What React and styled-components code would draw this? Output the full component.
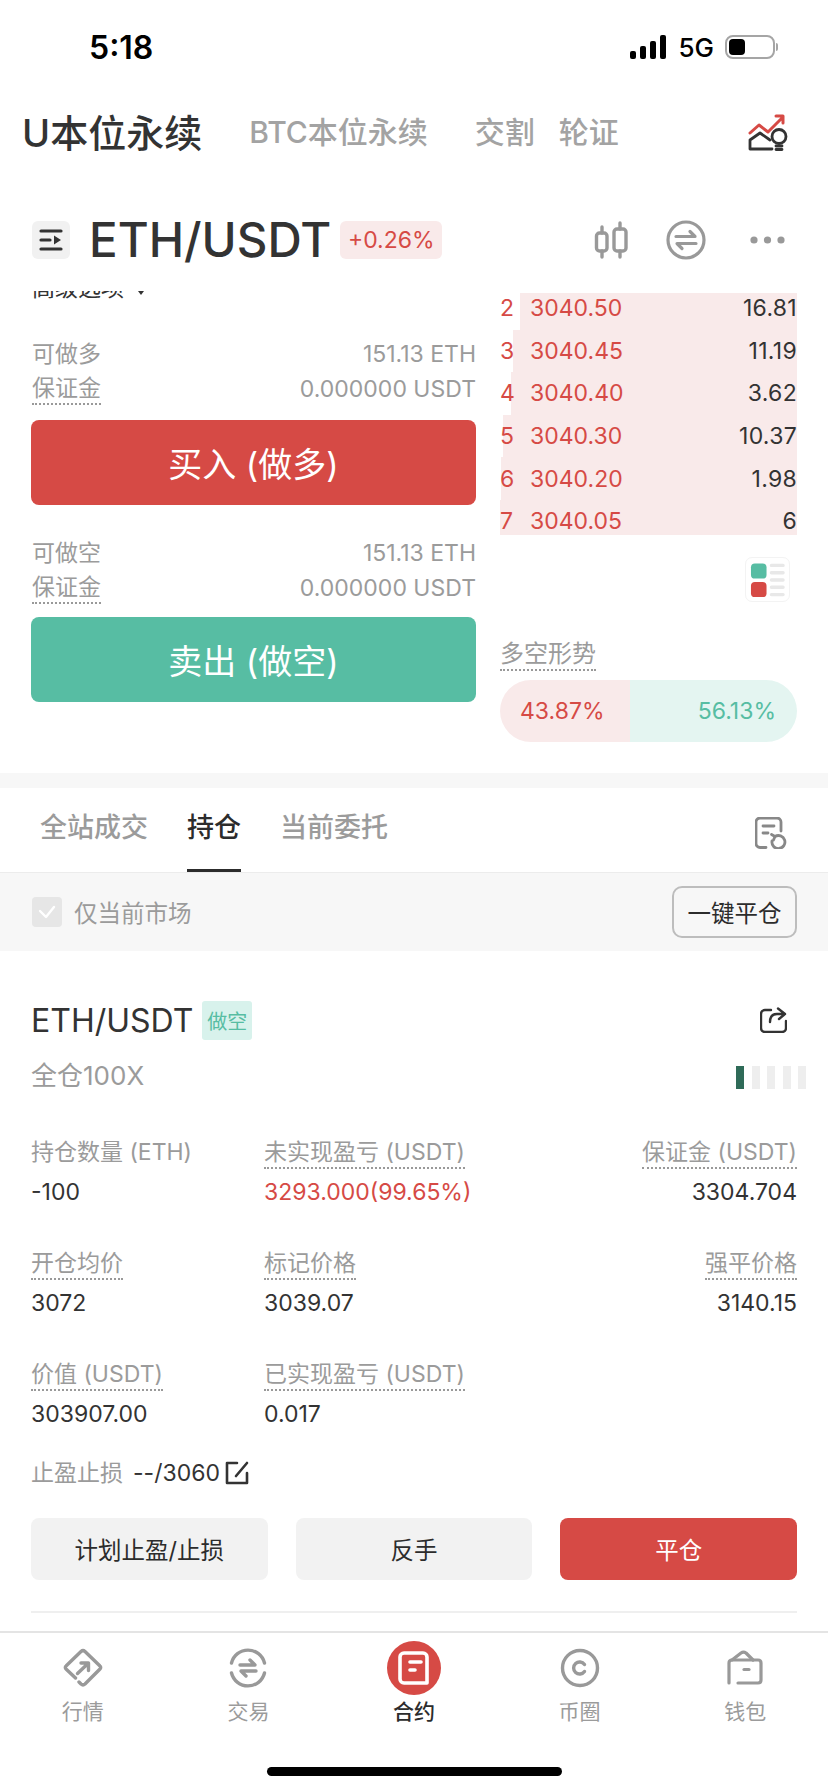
import React from "react";
import styled, { createGlobalStyle } from "styled-components";

const RED = "#d64a45";
const GREEN = "#57bda3";
const DARK = "#333";
const GREY = "#9b9b9b";

const GlobalStyle = createGlobalStyle`
  html, body {
    margin: 0;
    padding: 0;
    background: #fff;
  }
  * {
    box-sizing: border-box;
  }
`;

const Page = styled.div`
  width: 828px;
  height: 1792px;
  overflow: hidden;
  display: flex;
  flex-direction: column;
  background: #fff;
  color: ${DARK};
  font-family: Inter, "Noto Sans CJK SC", sans-serif;
`;

/* status bar */
const StatusBar = styled.div`
  height: 94px;
  flex: none;
  display: flex;
  align-items: center;
  padding: 0 53px 0 89px;
  color: #000;
`;
const Clock = styled.div`
  font-size: 32px;
  font-weight: 600;
  margin-right: auto;
`;
const Signal = styled.div`
  display: flex;
  align-items: flex-end;
  gap: 4px;
  height: 24px;
  margin-right: 12px;
`;
const SignalBar = styled.span`
  width: 6px;
  height: ${(props) => props.$h}px;
  background: #000;
  border-radius: 2px;
`;
const Network = styled.div`
  font-size: 26px;
  font-weight: 500;
  margin-right: 11px;
`;
const Battery = styled.div`
  position: relative;
  width: 50px;
  height: 24px;
  border: 2px solid #a5a5a5;
  border-radius: 8px;
  padding: 2px;
  &::after {
    content: "";
    position: absolute;
    right: -5px;
    top: 6px;
    width: 2px;
    height: 8px;
    background: #a5a5a5;
    border-radius: 0 2px 2px 0;
  }
`;
const BatteryLevel = styled.div`
  width: 16px;
  height: 100%;
  background: #000;
  border-radius: 4px;
`;

/* contract type tabs */
const TypeTabs = styled.div`
  height: 72px;
  flex: none;
  display: flex;
  align-items: center;
  padding: 0 40px 0 22px;
`;
const TypeTab = styled.div`
  font-size: ${(props) => (props.$active ? "38px" : "30px")};
  font-weight: 500;
  color: ${(props) => (props.$active ? DARK : "#a3a3a3")};
  margin-right: ${(props) => props.$gap}px;
  white-space: nowrap;
`;
const TipIcon = styled.svg`
  margin-left: auto;
  margin-top: 6px;
`;

/* market header */
const MarketBar = styled.div`
  height: 125px;
  flex: none;
  display: flex;
  align-items: flex-start;
  padding: 55px 42px 0 32px;
`;
const MenuButton = styled.div`
  width: 38px;
  height: 38px;
  background: #f1f1f1;
  border-radius: 6px;
  display: flex;
  align-items: center;
  justify-content: center;
  margin-right: 19px;
`;
const Pair = styled.div`
  font-size: 47.5px;
  font-weight: 500;
  line-height: 38px;
  margin-right: 9px;
`;
const ChangeBadge = styled.div`
  height: 38px;
  width: 102px;
  background: #f9eaea;
  border-radius: 6px;
  color: ${RED};
  font-size: 23px;
  display: flex;
  align-items: center;
  justify-content: center;
`;
const MarketActions = styled.div`
  margin-left: auto;
  display: flex;
  align-items: center;
  height: 38px;
`;

/* order form and book */
const TradeArea = styled.div`
  height: 482px;
  flex: none;
  display: grid;
  grid-template-columns: 445px 297px;
  column-gap: 24px;
  padding-left: 31px;
`;
const FormColumn = styled.div`
  display: flex;
  flex-direction: column;
`;
const ClippedOption = styled.div`
  height: 11px;
  margin-bottom: 34px;
  padding-left: 1px;
  overflow: hidden;
  display: flex;
  align-items: flex-end;
  gap: 14px;
  font-size: 23px;
  line-height: 27px;
  color: ${DARK};
`;
const OptionCaret = styled.span`
  width: 0;
  height: 0;
  border: 3.5px solid transparent;
  border-top: 4px solid ${DARK};
  border-bottom: 0;
  margin-bottom: 7px;
`;
const InfoRow = styled.div`
  height: 35px;
  padding-left: 1px;
  display: flex;
  align-items: center;
  justify-content: space-between;
  font-size: 23px;
  line-height: 30px;
  color: ${GREY};
`;
const Dotted = styled.span`
  display: inline-block;
  border-bottom: 2px dotted ${(props) => (props.$plain ? "transparent" : "#999")};
  line-height: 30px;
  color: ${GREY};
`;
const ActionButton = styled.div`
  height: ${(props) => (props.$small ? "62px" : "85px")};
  background: ${(props) => props.$bg || "#f2f2f2"};
  color: ${(props) => (props.$bg ? "#fff" : "#2c2c2c")};
  font-size: ${(props) => (props.$small ? "23.5px" : "34px")};
  border-radius: 8px;
  display: flex;
  align-items: center;
  justify-content: center;
  margin: ${(props) => props.$margin || "0"};
`;
const BookColumn = styled.div`
  display: flex;
  flex-direction: column;
  padding-top: 2px;
`;
const Book = styled.div`
  height: 242px;
  flex: none;
  overflow: hidden;
`;
const BookRow = styled.div`
  position: relative;
  height: 42.6px;
  display: flex;
  align-items: center;
  font-size: 23px;
  color: ${RED};
  &:first-child {
    margin-top: -6px;
  }
`;
const DepthBar = styled.div`
  position: absolute;
  top: 0;
  bottom: 0;
  right: 0;
  background: #f9eaea;
`;
const BookIndex = styled.span`
  position: relative;
  width: 30px;
`;
const BookPrice = styled.span`
  position: relative;
`;
const BookQty = styled.span`
  position: relative;
  margin-left: auto;
  letter-spacing: 0.3px;
  color: ${DARK};
`;
const LayoutToggle = styled.div`
  align-self: flex-end;
  width: 45px;
  height: 45px;
  margin: 22px 7px 0 0;
  padding: 4px;
  border: 1px solid #f3f3f3;
  border-radius: 7px;
  display: flex;
  align-items: center;
`;
const SentimentLabel = styled.div`
  margin-top: 37px;
  font-size: 24px;
  line-height: 30px;
`;
const SentimentPill = styled.div`
  margin-top: 9px;
  height: 62px;
  border-radius: 31px;
  overflow: hidden;
  display: flex;
  font-size: 23px;
`;
const LongShare = styled.div`
  width: 130px;
  background: #f9eaea;
  color: ${RED};
  display: flex;
  align-items: center;
  padding-left: 20px;
`;
const ShortShare = styled.div`
  flex: 1;
  background: #e4f5f1;
  color: ${GREEN};
  display: flex;
  align-items: center;
  justify-content: flex-end;
  padding-right: 21px;
`;

const Band = styled.div`
  height: 15px;
  flex: none;
  background: #f7f7f7;
`;

/* positions tabs */
const ListTabs = styled.div`
  height: 85px;
  flex: none;
  display: flex;
  gap: 39px;
  padding: 0 41px 0 40px;
  border-bottom: 1px solid #ececec;
`;
const ListTab = styled.div`
  height: 84px;
  padding-top: 22px;
  font-size: 27px;
  line-height: 36px;
  font-weight: 500;
  color: ${(props) => (props.$active ? "#2c2c2c" : GREY)};
  border-bottom: 3px solid ${(props) => (props.$active ? "#2c2c2c" : "transparent")};
`;
const HistoryIcon = styled.svg`
  margin: 29px 0 0 auto;
`;
const FilterBar = styled.div`
  height: 78px;
  flex: none;
  background: #f7f7f7;
  display: flex;
  align-items: center;
  padding: 0 31px 0 32px;
`;
const Checkbox = styled.div`
  width: 30px;
  height: 30px;
  background: #e6e6e6;
  border-radius: 4px;
  display: flex;
  align-items: center;
  justify-content: center;
  margin-right: 12px;
`;
const FilterLabel = styled.div`
  font-size: 23.5px;
  color: ${GREY};
`;
const CloseAll = styled.div`
  margin-left: auto;
  width: 125px;
  height: 52px;
  border: 2px solid #bdbdbd;
  border-radius: 10px;
  font-size: 23.5px;
  color: #2c2c2c;
  display: flex;
  align-items: center;
  justify-content: center;
`;

/* position card */
const Position = styled.div`
  flex: 1;
  padding: 49px 31px 0 31px;
  display: flex;
  flex-direction: column;
`;
const PositionHead = styled.div`
  height: 40px;
  display: flex;
  align-items: center;
`;
const PositionPair = styled.div`
  font-size: 32px;
  margin-right: 9px;
`;
const SideTag = styled.div`
  width: 50px;
  height: 39px;
  background: #d8f2ec;
  color: ${GREEN};
  font-size: 20px;
  border-radius: 3px;
  display: flex;
  align-items: center;
  justify-content: center;
`;
const ShareIcon = styled.svg`
  margin: 0 10px 0 auto;
`;
const MarginRow = styled.div`
  height: 30px;
  margin-top: 22px;
  display: flex;
  align-items: center;
  justify-content: space-between;
  font-size: 26px;
  line-height: 30px;
  color: ${GREY};
`;
const MarginLabel = styled.span`
  padding-bottom: 3px;
`;
const RiskMeter = styled.div`
  display: flex;
  gap: 7.5px;
  margin-right: -9px;
`;
const RiskStep = styled.span`
  width: 8px;
  height: 23px;
  background: ${(props) => (props.$on ? "#2f6b58" : "#eeeeee")};
`;
const Stats = styled.div`
  margin-top: 45px;
  display: grid;
  grid-template-columns: 233px 1fr auto;
  row-gap: 41px;
`;
const Stat = styled.div`
  display: flex;
  flex-direction: column;
  align-items: ${(props) => (props.$right ? "flex-end" : "flex-start")};
  font-size: 23px;
`;
const StatValue = styled.div`
  margin-top: 8px;
  font-size: 23px;
  line-height: 30px;
  color: ${(props) => (props.$red ? RED : DARK)};
`;
const StopRow = styled.div`
  height: 30px;
  margin-top: 29px;
  display: flex;
  align-items: center;
  line-height: 30px;
`;
const StopLabel = styled.span`
  font-size: 23px;
  color: ${GREY};
  margin-right: 10px;
`;
const StopValue = styled.span`
  font-size: 23px;
  margin-right: 5px;
`;
const ButtonRow = styled.div`
  margin-top: 30px;
  display: grid;
  grid-template-columns: repeat(3, 1fr);
  column-gap: 28px;
`;
const Divider = styled.div`
  height: 2px;
  margin-top: 31px;
  background: #efefef;
`;

/* bottom navigation */
const TabBar = styled.div`
  height: 161px;
  flex: none;
  border-top: 2px solid #e4e4e4;
  padding-top: 8px;
  display: flex;
  flex-direction: column;
`;
const TabRow = styled.div`
  display: grid;
  grid-template-columns: repeat(5, 1fr);
`;
const TabItem = styled.div`
  display: flex;
  flex-direction: column;
  align-items: center;
`;
const TabIcon = styled.div`
  width: 54px;
  height: 54px;
  border-radius: 50%;
  background: ${(props) => (props.$active ? RED : "transparent")};
  display: flex;
  align-items: center;
  justify-content: center;
`;
const TabLabel = styled.div`
  margin-top: 3px;
  font-size: 21px;
  line-height: 28px;
  color: ${(props) => (props.$active ? "#2c2c2c" : GREY)};
  font-weight: ${(props) => (props.$active ? 500 : 400)};
`;
const HomeIndicator = styled.div`
  width: 295px;
  height: 9px;
  margin: 41px auto 0;
  background: #000;
  border-radius: 5px;
`;

const stroke = { fill: "none", strokeLinecap: "round", strokeLinejoin: "round" };

const Candles = () => (
  <svg width="34" height="38" viewBox="0 0 34 38" style={{ marginRight: 38 }}>
    <g {...stroke} stroke="#999" strokeWidth="3.4">
      <path d="M8 6v6M8 30v6M26 2v6M26 30v6" />
      <rect x="2.5" y="12" width="10.5" height="18" rx="3" />
      <rect x="20" y="8" width="12" height="22" rx="3" />
    </g>
  </svg>
);

const SwapCircle = () => (
  <svg width="40" height="40" viewBox="0 0 40 40" style={{ marginRight: 43 }}>
    <g {...stroke} stroke="#999" strokeWidth="3.2">
      <circle cx="20" cy="20" r="18" />
      <path d="M10 16.500h19l-5-5M30 23.500H11l5 5" />
    </g>
  </svg>
);

const MoreDots = () => (
  <svg width="37" height="10" viewBox="0 0 37 10">
    <circle cx="5" cy="5" r="3.6" fill="#999" />
    <circle cx="18.5" cy="5" r="3.6" fill="#999" />
    <circle cx="32" cy="5" r="3.6" fill="#999" />
  </svg>
);

const MenuGlyph = () => (
  <svg width="24" height="24" viewBox="0 0 24 24">
    <g stroke="#333" strokeWidth="3.2" strokeLinecap="round">
      <path d="M2 3h20M2 21h20M2 12h9" />
    </g>
    <path d="M15 7.5 22 12l-7 4.5z" fill="#333" />
  </svg>
);

const tabIcons = [
  <svg key="market" width="40" height="40" viewBox="0 0 40 40">
    <g {...stroke} stroke="#999" strokeWidth="3.4">
      <path d="M12.500 30 3 21a2 2 0 0 1 0-3L18 3.500a3 3 0 0 1 4 0L37 18a2 2 0 0 1 0 3L22 36a3 3 0 0 1-4 0l-2-2" />
      <path d="M14.500 25.500 25 15.500M18 15h7.500v7.500" />
    </g>
  </svg>,
  <svg key="trade" width="40" height="40" viewBox="0 0 40 40">
    <g {...stroke} stroke="#999" strokeWidth="3.4">
      <path d="M3.500 15A17 17 0 0 1 36.500 15M3.500 25A17 17 0 0 0 36.500 25" />
      <path d="M12 17h15l-5-5M28 23H13l5 5" />
    </g>
  </svg>,
  <svg key="contract" width="34" height="36" viewBox="0 0 34 36">
    <g {...stroke} stroke="#fff" strokeWidth="3.6">
      <path d="M30 33H7a4 4 0 0 1-4-4V7a4 4 0 0 1 4-4h19a4 4 0 0 1 4 4z" />
      <path d="M13 12h11M13 20h5" />
    </g>
  </svg>,
  <svg key="coin" width="40" height="40" viewBox="0 0 40 40">
    <g {...stroke} stroke="#999" strokeWidth="3.4">
      <circle cx="20" cy="20" r="17.5" />
      <path d="M24.500 16.500a6 6 0 1 0 0 7" />
    </g>
  </svg>,
  <svg key="wallet" width="36" height="36" viewBox="0 0 36 36">
    <g {...stroke} stroke="#999" strokeWidth="3.2">
      <path d="M2 33V13c0-2 1-3 3-3h26c2 0 3 1 3 3v17c0 2-1 3-3 3H11" />
      <path d="M5 10l9-7c2-1.400 3-1.400 5 0l7 7" />
      <path d="M17 19.500h5" />
    </g>
  </svg>,
];

const tabs = ["行情", "交易", "合约", "币圈", "钱包"];

const bookRows = [
  { index: 2, price: "3040.50", qty: "16.81", depth: 277 },
  { index: 3, price: "3040.45", qty: "11.19", depth: 284 },
  { index: 4, price: "3040.40", qty: "3.62", depth: 286 },
  { index: 5, price: "3040.30", qty: "10.37", depth: 294 },
  { index: 6, price: "3040.20", qty: "1.98", depth: 296 },
  { index: 7, price: "3040.05", qty: "6", depth: 297 },
];

const stats = [
  { label: "持仓数量 (ETH)", value: "-100", plain: true },
  { label: "未实现盈亏 (USDT)", value: "3293.000(99.65%)", red: true },
  { label: "保证金 (USDT)", value: "3304.704", right: true },
  { label: "开仓均价", value: "3072" },
  { label: "标记价格", value: "3039.07" },
  { label: "强平价格", value: "3140.15", right: true },
  { label: "价值 (USDT)", value: "303907.00" },
  { label: "已实现盈亏 (USDT)", value: "0.017" },
];

const App = () => {
  return (
    <Page>
      <GlobalStyle />
      <StatusBar>
        <Clock>5:18</Clock>
        <Signal>
          {[8, 13, 18, 24].map((h) => (
            <SignalBar key={h} $h={h} />
          ))}
        </Signal>
        <Network>5G</Network>
        <Battery>
          <BatteryLevel />
        </Battery>
      </StatusBar>

      <TypeTabs>
        <TypeTab $active $gap={47}>U本位永续</TypeTab>
        <TypeTab $gap={47}>BTC本位永续</TypeTab>
        <TypeTab $gap={24}>交割</TypeTab>
        <TypeTab $gap={0}>轮证</TypeTab>
        <TipIcon width="40" height="38" viewBox="0 0 40 38">
          <g {...stroke} stroke={RED} strokeWidth="3">
            <path d="M2 19 11 11 20 18 35 3M28 2h7v7" />
          </g>
          <g {...stroke} stroke="#333" strokeWidth="2.800">
            <path d="M24 35H2v-9l10-7 10 7" />
            <circle cx="31" cy="22.500" r="7" />
            <path d="M28 32h6M28 35.500h6" />
          </g>
        </TipIcon>
      </TypeTabs>

      <MarketBar>
        <MenuButton>
          <MenuGlyph />
        </MenuButton>
        <Pair>ETH/USDT</Pair>
        <ChangeBadge>+0.26%</ChangeBadge>
        <MarketActions>
          <Candles />
          <SwapCircle />
          <MoreDots />
        </MarketActions>
      </MarketBar>

      <TradeArea>
        <FormColumn>
          <ClippedOption>
            高级选项
            <OptionCaret />
          </ClippedOption>
          <InfoRow>
            <span>可做多</span>
            <span>151.13 ETH</span>
          </InfoRow>
          <InfoRow>
            <Dotted>保证金</Dotted>
            <span>0.000000 USDT</span>
          </InfoRow>
          <ActionButton $bg={RED} $margin="14px 0 30px">买入 (做多)</ActionButton>
          <InfoRow>
            <span>可做空</span>
            <span>151.13 ETH</span>
          </InfoRow>
          <InfoRow>
            <Dotted>保证金</Dotted>
            <span>0.000000 USDT</span>
          </InfoRow>
          <ActionButton $bg={GREEN} $margin="12px 0 0">卖出 (做空)</ActionButton>
        </FormColumn>

        <BookColumn>
          <Book>
            {bookRows.map((row) => (
              <BookRow key={row.index}>
                <DepthBar style={{ width: row.depth }} />
                <BookIndex>{row.index}</BookIndex>
                <BookPrice>{row.price}</BookPrice>
                <BookQty>{row.qty}</BookQty>
              </BookRow>
            ))}
          </Book>
          <LayoutToggle>
            <svg width="36" height="36" viewBox="0 0 36 36">
              <rect x="1" y="1" width="16" height="15.500" rx="4" fill={GREEN} />
              <rect x="1" y="20" width="16" height="15.500" rx="4" fill={RED} />
              <g stroke="#e8e8e8" strokeWidth="3.500" strokeLinecap="round">
                <path d="M22 3h12M22 10.500h12M22 18h12M22 25.500h12M22 33h12" />
              </g>
            </svg>
          </LayoutToggle>
          <SentimentLabel>
            <Dotted>多空形势</Dotted>
          </SentimentLabel>
          <SentimentPill>
            <LongShare>43.87%</LongShare>
            <ShortShare>56.13%</ShortShare>
          </SentimentPill>
        </BookColumn>
      </TradeArea>

      <Band />

      <ListTabs>
        <ListTab>全站成交</ListTab>
        <ListTab $active>持仓</ListTab>
        <ListTab>当前委托</ListTab>
        <HistoryIcon width="32" height="32" viewBox="0 0 32 32">
          <g {...stroke} stroke="#888" strokeWidth="2.800">
            <path d="M11 30.500H5a4 4 0 0 1-4-4V5a4 4 0 0 1 4-4h17a4 4 0 0 1 4 4v9" />
            <path d="M8 9h11M8 16h5" />
            <path d="M20 19.500A6.500 6.500 0 1 1 17 24" />
            <path d="M16.500 17.500l3.500 2-1.500 3.500" />
          </g>
        </HistoryIcon>
      </ListTabs>

      <FilterBar>
        <Checkbox>
          <svg width="18" height="14" viewBox="0 0 18 14">
            <path d="M2 6l6 6 8-10" {...stroke} stroke="#fff" strokeWidth="2.400" />
          </svg>
        </Checkbox>
        <FilterLabel>仅当前市场</FilterLabel>
        <CloseAll>一键平仓</CloseAll>
      </FilterBar>

      <Position>
        <PositionHead>
          <PositionPair>ETH/USDT</PositionPair>
          <SideTag>做空</SideTag>
          <ShareIcon width="27" height="26" viewBox="0 0 27 26">
            <g {...stroke} stroke="#333" strokeWidth="2.400">
              <path d="M11 3H5a4 4 0 0 0-4 4v14a4 4 0 0 0 4 4h17a4 4 0 0 0 4-4v-7" />
              <path d="M10 15c0-5 2-8 7-8h8M18 1.500 25 7l-6 5" />
            </g>
          </ShareIcon>
        </PositionHead>
        <MarginRow>
          <MarginLabel>全仓100X</MarginLabel>
          <RiskMeter>
            <RiskStep $on />
            <RiskStep />
            <RiskStep />
            <RiskStep />
            <RiskStep />
          </RiskMeter>
        </MarginRow>

        <Stats>
          {stats.map((stat) => (
            <Stat key={stat.label} $right={stat.right}>
              <Dotted $plain={stat.plain}>{stat.label}</Dotted>
              <StatValue $red={stat.red}>{stat.value}</StatValue>
            </Stat>
          ))}
        </Stats>

        <StopRow>
          <StopLabel>止盈止损</StopLabel>
          <StopValue>--/3060</StopValue>
          <svg width="24" height="24" viewBox="0 0 24 24">
            <g {...stroke} stroke="#333" strokeWidth="2.600">
              <path d="M12 2H2v20h20V12" />
              <path d="M22 2 11 15" />
            </g>
          </svg>
        </StopRow>

        <ButtonRow>
          <ActionButton $small>计划止盈/止损</ActionButton>
          <ActionButton $small>反手</ActionButton>
          <ActionButton $small $bg={RED}>平仓</ActionButton>
        </ButtonRow>
        <Divider />
      </Position>

      <TabBar>
        <TabRow>
          {tabs.map((label, i) => (
            <TabItem key={label}>
              <TabIcon $active={i === 2}>{tabIcons[i]}</TabIcon>
              <TabLabel $active={i === 2}>{label}</TabLabel>
            </TabItem>
          ))}
        </TabRow>
        <HomeIndicator />
      </TabBar>
    </Page>
  );
};

export default App;
